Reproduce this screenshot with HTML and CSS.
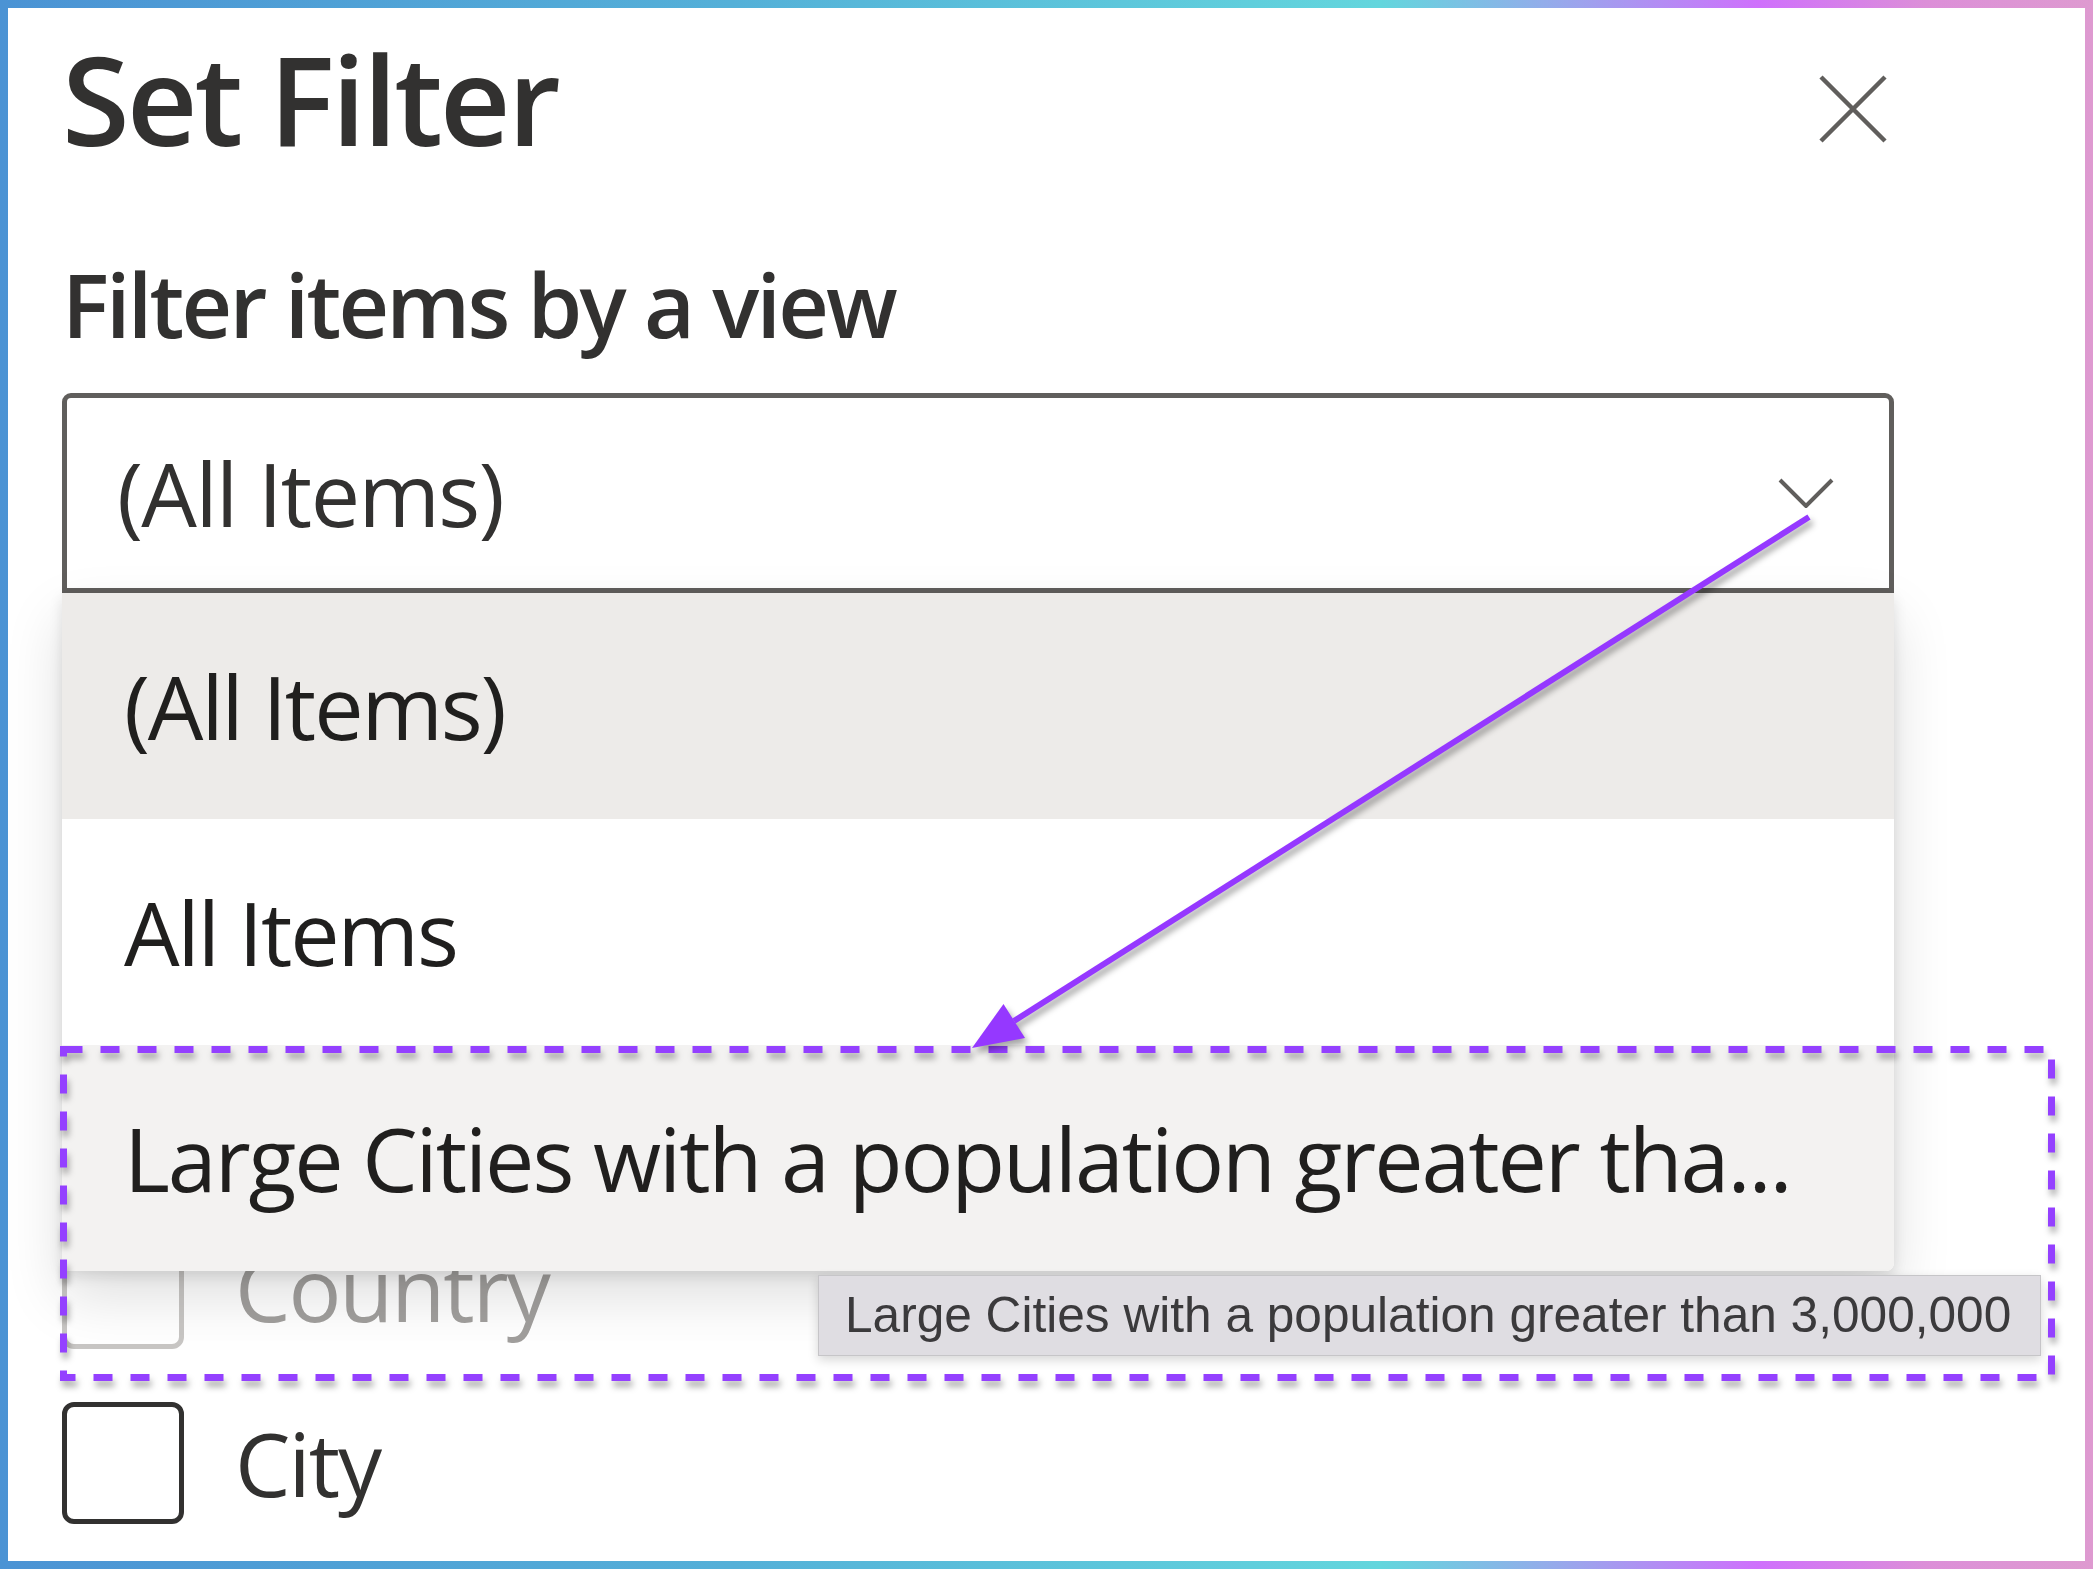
FILE: index.html
```html
<!DOCTYPE html>
<html lang="en">
<head>
<meta charset="utf-8">
<title>Set Filter</title>
<link rel="stylesheet" href="styles.css">
</head>
<body>
<div class="frame">
  <div class="panel">
    <header class="panel-header">
      <h1 class="title">Set Filter</h1>
      <button class="close" aria-label="Close">
        <svg viewBox="0 0 68 68" width="68" height="68"><path d="M2 2 L66 66 M66 2 L2 66" /></svg>
      </button>
    </header>

    <div class="field-label">Filter items by a view</div>

    <div class="dropdown">
      <div class="dropdown-box">
        <span class="dropdown-value">(All Items)</span>
        <svg class="chevron" viewBox="0 0 56 30" width="56" height="30"><path d="M2 2 L28 28 L54 2" /></svg>
      </div>
      <ul class="dropdown-list">
        <li class="option option-selected">(All Items)</li>
        <li class="option">All Items</li>
        <li class="option option-hover">Large Cities with a population greater tha...</li>
      </ul>
    </div>

    <div class="checks">
      <label class="check check-disabled"><span class="box"></span><span class="check-text">Country</span></label>
      <label class="check"><span class="box"></span><span class="check-text">City</span></label>
    </div>

    <div class="tooltip">Large Cities with a population greater than 3,000,000</div>
  </div>

  <svg class="annotations" viewBox="0 0 2093 1569" width="2093" height="1569">
    <rect class="dash-rect" x="63.5" y="1049.5" width="1988" height="328" />
    <g class="arrow">
      <line x1="1809" y1="517" x2="1014" y2="1021" />
      <polygon points="972,1048 1025,1038 1003.5,1004" />
    </g>
  </svg>
</div>
</body>
</html>
```

FILE: styles.css
```css
* { box-sizing: border-box; }

html, body {
  margin: 0;
  padding: 0;
  background: #ffffff;
}

body {
  font-family: "Open Sans", "Noto Sans", "DejaVu Sans", sans-serif;
  color: #323130;
}

.frame {
  position: relative;
  width: 2093px;
  height: 1569px;
  padding: 8px;
  background: linear-gradient(90deg, #4b93d4 0%, #54b0d8 35%, #63d6dd 66%, #9aa6ec 75%, #cf70fc 84%, #dc8fd8 92%, #de9ad0 100%);
}

.panel {
  position: relative;
  width: 100%;
  height: 100%;
  background: #ffffff;
  padding: 28px 191px 0 54px;
}

.panel-header {
  display: flex;
  justify-content: space-between;
  align-items: flex-start;
}

.title {
  margin: 0;
  font-size: 123px;
  line-height: 126px;
  font-weight: 600;
  letter-spacing: -3px;
  color: #323130;
}

.close {
  margin: 39px 7px 0 0;
  padding: 0;
  border: 0;
  background: transparent;
  display: flex;
}

.close svg path {
  stroke: #605e5c;
  stroke-width: 4.5;
  fill: none;
}

.field-label {
  margin-top: 98px;
  font-size: 88px;
  line-height: 88px;
  font-weight: 600;
  letter-spacing: -2.8px;
  color: #323130;
}

.dropdown {
  position: relative;
  margin-top: 45px;
}

.dropdown-box {
  height: 200px;
  border: 5px solid #605e5c;
  border-radius: 9px 9px 0 0;
  display: flex;
  align-items: center;
  justify-content: space-between;
  padding: 0 55px 0 50px;
  background: #ffffff;
}

.dropdown-value {
  font-size: 88px;
  line-height: 190px;
  letter-spacing: -1.6px;
  color: #323130;
}

.chevron path {
  stroke: #605e5c;
  stroke-width: 4;
  fill: none;
}

.dropdown-list {
  position: absolute;
  top: 100%;
  left: 0;
  right: 0;
  margin: 0;
  padding: 0;
  list-style: none;
  background: #ffffff;
  border-radius: 0 0 8px 8px;
  box-shadow: 0 26px 58px rgba(0, 0, 0, 0.13), 0 5px 14px rgba(0, 0, 0, 0.11);
  z-index: 2;
  overflow: hidden;
}

.option {
  height: 226px;
  padding-left: 62px;
  font-size: 88px;
  line-height: 226px;
  letter-spacing: -2.1px;
  color: #201f1e;
  white-space: nowrap;
}

.option-selected { background: #edebe9; }
.option-hover { background: #f3f2f1; }

.checks {
  margin-top: 634px;
  display: flex;
  flex-direction: column;
  gap: 53px;
}

.check {
  display: flex;
  align-items: center;
  gap: 51px;
  height: 122px;
}

.box {
  width: 122px;
  height: 122px;
  border: 5px solid #323130;
  border-radius: 12px;
  flex: none;
}

.check-text {
  font-size: 88px;
  letter-spacing: -2px;
  color: #323130;
}

.check-disabled .box { border-color: #c8c6c4; }
.check-disabled .check-text { color: #a19f9d; }

.tooltip {
  position: absolute;
  left: 810px;
  top: 1267px;
  width: 1223px;
  height: 81px;
  padding-left: 26px;
  background: #dfdde2;
  border: 1px solid #c6c5c8;
  box-shadow: 0 4px 10px rgba(0, 0, 0, 0.16);
  font-family: "Liberation Sans", Arial, sans-serif;
  font-size: 49.6px;
  line-height: 79px;
  color: #3b3a3c;
  white-space: nowrap;
  z-index: 3;
}

.annotations {
  position: absolute;
  left: 0;
  top: 0;
  pointer-events: none;
  z-index: 4;
}

.dash-rect {
  fill: none;
  stroke: #9440ff;
  stroke-width: 7;
  stroke-dasharray: 19 18;
  filter: drop-shadow(2px 6px 3px rgba(0, 0, 0, 0.3));
}

.arrow {
  filter: drop-shadow(3px 5px 3px rgba(0, 0, 0, 0.35));
}

.arrow line {
  stroke: #9538ff;
  stroke-width: 6;
}

.arrow polygon {
  fill: #9538ff;
}
```
